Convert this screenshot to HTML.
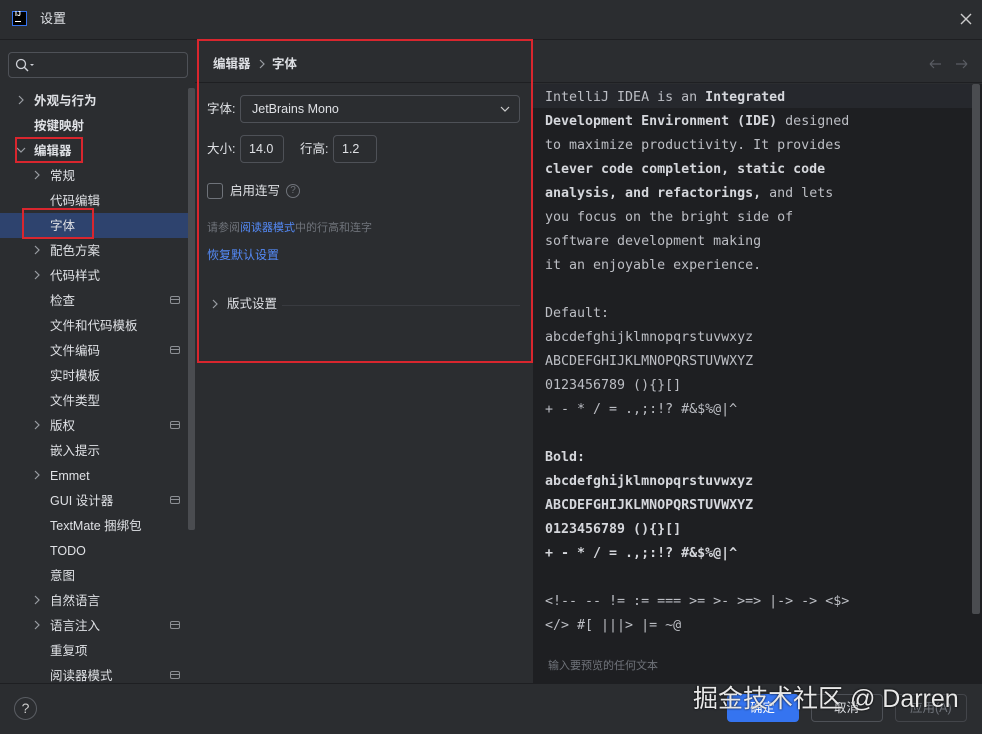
<!DOCTYPE html>
<html><head><meta charset="utf-8"><style>
*{margin:0;padding:0;box-sizing:border-box}
body{width:982px;height:734px;background:#2b2d30;position:relative;overflow:hidden;font-family:"Liberation Sans","Noto Sans CJK SC",sans-serif;color:#dfe1e5;font-size:12.5px}
.a{position:absolute}
.t{position:absolute;white-space:nowrap;line-height:16px;height:16px}
.ti{left:50px}
.chev{position:absolute;width:8px;height:10px}
.mono{font-family:"DejaVu Sans Mono","Liberation Mono",monospace;font-size:13.3px;line-height:16px;color:#bcbec4;white-space:pre;position:absolute;left:545px}
.b{font-weight:bold;color:#d5d7dc}
.ic{position:absolute;left:170px;width:10px;height:8px;border:1px solid #8c8f94;border-radius:2px}
.ic:after{content:"";position:absolute;left:0;right:0;top:2px;border-top:1px solid #8c8f94}
.red{position:absolute;border:2px solid #d9262e}
</style></head><body>
<svg width="0" height="0" style="position:absolute"><defs><symbol id="cv" viewBox="0 0 8 10"><path d="M2 1l4 4-4 4" fill="none" stroke="#9a9da3" stroke-width="1.2"/></symbol></defs></svg>
<div class="a" style="left:0;top:0;width:982px;height:40px;background:#2b2d30;border-bottom:1px solid #1e1f22"></div>
<div class="a" style="left:12px;top:11px;width:15px;height:15px;background:#000;border:1px solid #3574f0"></div>
<div class="t" style="left:15px;top:10px;font-size:7px;color:#fff;font-weight:bold;line-height:9px">IJ</div>
<div class="a" style="left:15px;top:21px;width:6px;height:1px;background:#fff"></div>
<div class="t" style="left:40px;top:11px;font-size:13px">设置</div>
<svg class="a" style="left:960px;top:13px" width="12" height="12"><path d="M1 1l10 10M11 1L1 11" stroke="#ccc" stroke-width="1.4"/></svg>

<div class="a" style="left:8px;top:52px;width:180px;height:26px;border:1px solid #4e5157;border-radius:4px;background:#2b2d30"></div>
<svg class="a" style="left:15px;top:58px" width="22" height="14"><circle cx="6" cy="6" r="4.5" fill="none" stroke="#ced0d6" stroke-width="1.3"/><line x1="9.3" y1="9.3" x2="13" y2="13" stroke="#ced0d6" stroke-width="1.4"/><path d="M15 6h4l-2 2z" fill="#ced0d6"/></svg>

<div class="a" style="left:0;top:213px;width:195px;height:25px;background:#2e436e"></div>
<div class="a" style="left:188px;top:88px;width:7px;height:442px;background:#4a4c50;border-radius:2px"></div>
<svg class="chev" style="left:17px;top:95px"><use href="#cv"/></svg>
<div class="t" style="left:34px;top:93px;font-weight:bold">外观与行为</div>
<div class="t" style="left:34px;top:118px;font-weight:bold">按键映射</div>
<svg class="chev" style="left:17px;top:145px;transform:rotate(90deg)"><use href="#cv"/></svg>
<div class="t" style="left:34px;top:143px;font-weight:bold">编辑器</div>
<svg class="chev" style="left:33px;top:170px"><use href="#cv"/></svg><div class="t ti" style="top:168px">常规</div>
<div class="t ti" style="top:193px">代码编辑</div>
<div class="t ti" style="top:218px">字体</div>
<svg class="chev" style="left:33px;top:245px"><use href="#cv"/></svg><div class="t ti" style="top:243px">配色方案</div>
<svg class="chev" style="left:33px;top:270px"><use href="#cv"/></svg><div class="t ti" style="top:268px">代码样式</div>
<div class="t ti" style="top:293px">检查</div><div class="ic" style="top:296px"></div>
<div class="t ti" style="top:318px">文件和代码模板</div>
<div class="t ti" style="top:343px">文件编码</div><div class="ic" style="top:346px"></div>
<div class="t ti" style="top:368px">实时模板</div>
<div class="t ti" style="top:393px">文件类型</div>
<svg class="chev" style="left:33px;top:420px"><use href="#cv"/></svg><div class="t ti" style="top:418px">版权</div><div class="ic" style="top:421px"></div>
<div class="t ti" style="top:443px">嵌入提示</div>
<svg class="chev" style="left:33px;top:470px"><use href="#cv"/></svg><div class="t ti" style="top:468px">Emmet</div>
<div class="t ti" style="top:493px">GUI 设计器</div><div class="ic" style="top:496px"></div>
<div class="t ti" style="top:518px">TextMate 捆绑包</div>
<div class="t ti" style="top:543px">TODO</div>
<div class="t ti" style="top:568px">意图</div>
<svg class="chev" style="left:33px;top:595px"><use href="#cv"/></svg><div class="t ti" style="top:593px">自然语言</div>
<svg class="chev" style="left:33px;top:620px"><use href="#cv"/></svg><div class="t ti" style="top:618px">语言注入</div><div class="ic" style="top:621px"></div>
<div class="t ti" style="top:643px">重复项</div>
<div class="t ti" style="top:668px">阅读器模式</div><div class="ic" style="top:671px"></div>

<div class="a" style="left:195px;top:82px;width:787px;height:1px;background:#1e1f22"></div>
<div class="t" style="left:213px;top:56px;font-weight:bold">编辑器</div>
<svg class="chev" style="left:258px;top:59px"><use href="#cv"/></svg>
<div class="t" style="left:272px;top:56px;font-weight:bold">字体</div>
<svg class="a" style="left:928px;top:58px" width="42" height="12"><path d="M2 6h11M2 6l4-4M2 6l4 4M28 6h11M39 6l-4-4M39 6l-4 4" fill="none" stroke="#5a5d63" stroke-width="1.2"/></svg>

<div class="t" style="left:207px;top:101px">字体:</div>
<div class="a" style="left:240px;top:95px;width:280px;height:28px;border:1px solid #4e5157;border-radius:4px;background:#2b2d30"></div>
<div class="t" style="left:252px;top:101px">JetBrains Mono</div>
<svg class="a" style="left:500px;top:105px" width="10" height="8"><path d="M1 2l4 4 4-4" fill="none" stroke="#ccc" stroke-width="1.2"/></svg>
<div class="t" style="left:207px;top:141px">大小:</div>
<div class="a" style="left:240px;top:135px;width:44px;height:28px;border:1px solid #4e5157;border-radius:4px"></div>
<div class="t" style="left:249px;top:141px">14.0</div>
<div class="t" style="left:300px;top:141px">行高:</div>
<div class="a" style="left:333px;top:135px;width:44px;height:28px;border:1px solid #4e5157;border-radius:4px"></div>
<div class="t" style="left:342px;top:141px">1.2</div>
<div class="a" style="left:207px;top:183px;width:16px;height:16px;border:1px solid #6f737a;border-radius:3px"></div>
<div class="t" style="left:230px;top:183px">启用连写</div>
<div class="a" style="left:286px;top:184px;width:14px;height:14px;border:1px solid #6f737a;border-radius:50%;color:#6f737a;font-size:10px;text-align:center;line-height:12px">?</div>
<div class="t" style="left:207px;top:220px;font-size:11px;color:#6f737a">请参阅<span style="color:#548af7">阅读器模式</span>中的行高和连字</div>
<div class="t" style="left:207px;top:247px;color:#548af7;font-size:12px">恢复默认设置</div>
<svg class="chev" style="left:211px;top:299px"><use href="#cv"/></svg>
<div class="t" style="left:227px;top:296px">版式设置</div>
<div class="a" style="left:282px;top:305px;width:238px;height:1px;background:#393b40"></div>

<div class="a" style="left:533px;top:84px;width:449px;height:599px;background:#1e1f22"></div>
<div class="a" style="left:533px;top:84px;width:439px;height:24px;background:#26282d"></div>
<div class="a" style="left:972px;top:84px;width:8px;height:530px;background:#4a4c50;border-radius:2px"></div>
<div class="mono" style="top:90px">IntelliJ IDEA is an <span class="b">Integrated</span></div>
<div class="mono" style="top:114px"><span class="b">Development Environment (IDE)</span> designed</div>
<div class="mono" style="top:138px">to maximize productivity. It provides</div>
<div class="mono" style="top:162px"><span class="b">clever code completion, static code</span></div>
<div class="mono" style="top:186px"><span class="b">analysis, and refactorings,</span> and lets</div>
<div class="mono" style="top:210px">you focus on the bright side of</div>
<div class="mono" style="top:234px">software development making</div>
<div class="mono" style="top:258px">it an enjoyable experience.</div>
<div class="mono" style="top:306px">Default:</div>
<div class="mono" style="top:330px">abcdefghijklmnopqrstuvwxyz</div>
<div class="mono" style="top:354px">ABCDEFGHIJKLMNOPQRSTUVWXYZ</div>
<div class="mono" style="top:378px">0123456789 (){}[]</div>
<div class="mono" style="top:402px">+ - * / = .,;:!? #&amp;$%@|^</div>
<div class="mono b" style="top:450px">Bold:</div>
<div class="mono b" style="top:474px">abcdefghijklmnopqrstuvwxyz</div>
<div class="mono b" style="top:498px">ABCDEFGHIJKLMNOPQRSTUVWXYZ</div>
<div class="mono b" style="top:522px">0123456789 (){}[]</div>
<div class="mono b" style="top:546px">+ - * / = .,;:!? #&amp;$%@|^</div>
<div class="mono" style="top:594px">&lt;!-- -- != := === &gt;= &gt;- &gt;=&gt; |-&gt; -&gt; &lt;$&gt;</div>
<div class="mono" style="top:618px">&lt;/&gt; #[ |||&gt; |= ~@</div>
<div class="t" style="left:548px;top:658px;font-size:11px;color:#6f737a">输入要预览的任何文本</div>

<div class="a" style="left:0;top:683px;width:982px;height:1px;background:#1e1f22"></div>
<div class="a" style="left:14px;top:697px;width:23px;height:23px;border:1px solid #5a5d63;border-radius:50%;color:#ccc;text-align:center;line-height:21px;font-size:14px">?</div>
<div class="a" style="left:727px;top:694px;width:72px;height:28px;background:#3574f0;border-radius:4px"></div>
<div class="t" style="left:750px;top:700px;color:#fff">确定</div>
<div class="a" style="left:811px;top:694px;width:72px;height:28px;border:1px solid #4e5157;border-radius:4px"></div>
<div class="t" style="left:834px;top:700px">取消</div>
<div class="a" style="left:895px;top:694px;width:72px;height:28px;border:1px solid #43454a;border-radius:4px"></div>
<div class="t" style="left:910px;top:700px;color:#6f737a">应用(A)</div>
<div class="t" style="left:693px;top:683px;font-size:25px;line-height:32px;height:32px;color:#e8e8e8;text-shadow:0 0 2px #000">掘金技术社区 @ Darren</div>

<div class="red" style="left:197px;top:39px;width:336px;height:324px"></div>
<div class="red" style="left:15px;top:137px;width:68px;height:26px"></div>
<div class="red" style="left:22px;top:208px;width:72px;height:31px"></div>
</body></html>
